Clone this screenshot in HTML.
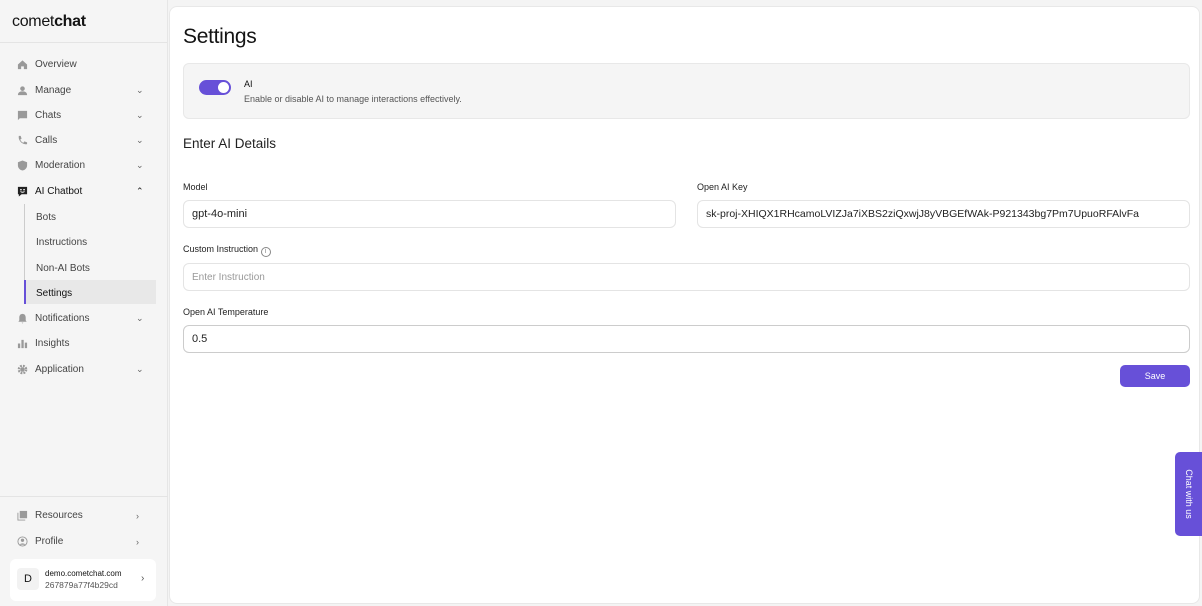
<!DOCTYPE html>
<html><head><style>
*{box-sizing:border-box;margin:0;padding:0}
body{width:1202px;height:606px;background:#f4f4f4;font-family:"Liberation Sans",sans-serif;color:#141414;position:relative;overflow:hidden}
.side{position:absolute;left:0;top:0;width:168px;height:606px;background:#f5f5f5;border-right:1px solid #e6e6e6}
.logo{height:43px;border-bottom:1px solid #e4e4e4;padding:13px 0 0 12px;font-size:16px;letter-spacing:-0.3px}
.logo b{font-weight:700}
.nav{position:absolute;left:0;width:168px;height:25px;font-size:10px;color:#444;display:flex;align-items:center;margin-top:1px}
.nav .ic{position:absolute;left:17px;top:7px;width:11px;height:11px}
.nav .t{position:absolute;left:35px}
.nav .ch{position:absolute;left:136px;font-size:9px;color:#666}
.sub{position:absolute;left:36px;font-size:10px;color:#444;margin-top:1px}
.main{position:absolute;left:169px;top:6px;width:1031px;height:598px;background:#fff;border:1px solid #e8e8e8;border-radius:8px}
h1{position:absolute;left:13px;top:18px;font-size:21px;font-weight:400;letter-spacing:-0.3px}
.card{position:absolute;left:13px;top:56px;width:1007px;height:56px;background:#f5f5f5;border:1px solid #e8e8e8;border-radius:6px}
.tog{position:absolute;left:15px;top:16px;width:32px;height:15px;background:#6750d8;border-radius:8px}
.tog:after{content:"";position:absolute;right:2px;top:2px;width:11px;height:11px;border-radius:50%;background:#fff}
.lbl{position:absolute;font-size:9px;color:#222}
.inp{position:absolute;height:28px;border:1px solid #e4e4e4;border-radius:6px;font-size:11px;padding-left:8px;display:flex;align-items:center;color:#222;white-space:nowrap;overflow:hidden}
</style></head><body>
<div class="side">
<div class="logo">comet<b>chat</b></div>
<div class="nav" style="top:51px"><svg class="ic" viewBox="0 0 12 12"><path d="M1 6L6 1.5 11 6V11H7.5V8h-3v3H1z" fill="#999"/></svg><span class="t">Overview</span></div>
<div class="nav" style="top:77px"><svg class="ic" viewBox="0 0 12 12"><circle cx="6" cy="4" r="2.5" fill="#999"/><path d="M1 11c0-3 2.5-4 5-4s5 1 5 4z" fill="#999"/></svg><span class="t">Manage</span><span class="ch">⌄</span></div>
<div class="nav" style="top:102px"><svg class="ic" viewBox="0 0 12 12"><path d="M1 1h10v8H3l-2 2z" fill="#999"/></svg><span class="t">Chats</span><span class="ch">⌄</span></div>
<div class="nav" style="top:127px"><svg class="ic" viewBox="0 0 12 12"><path d="M2 1l2 0 1 3-1.5 1c1 2 2 3 3.5 3.5L8 7l3 1v2c-5 1-10-4-9-9z" fill="#999"/></svg><span class="t">Calls</span><span class="ch">⌄</span></div>
<div class="nav" style="top:152px"><svg class="ic" viewBox="0 0 12 12"><path d="M6 0.5L11 2.5V6c0 3-2.5 5-5 5.5C3.5 11 1 9 1 6V2.5z" fill="#999"/></svg><span class="t">Moderation</span><span class="ch">⌄</span></div>
<div class="nav" style="top:178px;color:#111"><svg class="ic" viewBox="0 0 12 12"><path d="M1 1h10v8H5l-3 2.5V9H1z" fill="#222"/><circle cx="4.3" cy="4" r=".9" fill="#fff"/><circle cx="7.7" cy="4" r=".9" fill="#fff"/><path d="M3.8 6q2.2 1.6 4.4 0" stroke="#fff" fill="none"/></svg><span class="t">AI Chatbot</span><span class="ch" style="color:#222">⌃</span></div>
<div style="position:absolute;left:24px;top:204px;width:1px;height:100px;background:#ccc"></div>
<div style="position:absolute;left:24px;top:280px;width:2px;height:24px;background:#6750d8"></div>
<div style="position:absolute;left:26px;top:280px;width:130px;height:24px;background:#e8e8e8"></div>
<div class="sub" style="top:211px">Bots</div>
<div class="sub" style="top:236px">Instructions</div>
<div class="sub" style="top:262px">Non-AI Bots</div>
<div class="sub" style="top:287px;color:#111">Settings</div>
<div class="nav" style="top:305px"><svg class="ic" viewBox="0 0 12 12"><path d="M6 1c2.5 0 3.5 2 3.5 4V8l1 1.5h-9L2.5 8V5C2.5 3 3.5 1 6 1zM5 10.5h2L6 11.5z" fill="#999"/></svg><span class="t">Notifications</span><span class="ch">⌄</span></div>
<div class="nav" style="top:330px"><svg class="ic" viewBox="0 0 12 12"><path d="M1 6h2.5v5H1zM4.8 2h2.5v9H4.8zM8.5 5H11v6H8.5z" fill="#999"/></svg><span class="t">Insights</span></div>
<div class="nav" style="top:356px"><svg class="ic" viewBox="0 0 12 12"><circle cx="6" cy="6" r="4" fill="none" stroke="#999" stroke-width="2.5" stroke-dasharray="2 1.2"/><circle cx="6" cy="6" r="2.5" fill="#999"/></svg><span class="t">Application</span><span class="ch">⌄</span></div>
<div style="position:absolute;left:0;top:496px;width:168px;height:1px;background:#e4e4e4"></div>
<div class="nav" style="top:502px"><svg class="ic" viewBox="0 0 12 12"><rect x="3" y="1" width="8" height="8" fill="#999"/><path d="M1 3v8h8" stroke="#999" fill="none"/></svg><span class="t">Resources</span><span class="ch">›</span></div>
<div class="nav" style="top:528px"><svg class="ic" viewBox="0 0 12 12"><circle cx="6" cy="6" r="5" fill="none" stroke="#999"/><circle cx="6" cy="4.7" r="1.8" fill="#999"/><path d="M2.8 9.5c1-2 5.4-2 6.4 0" fill="#999"/></svg><span class="t">Profile</span><span class="ch">›</span></div>
<div style="position:absolute;left:10px;top:559px;width:146px;height:42px;background:#fff;border-radius:6px">
<div style="position:absolute;left:7px;top:9px;width:22px;height:22px;background:#f2f2f2;border-radius:4px;font-size:11px;text-align:center;line-height:22px">D</div>
<div style="position:absolute;left:35px;top:10px;font-size:8px;color:#111">demo.cometchat.com</div>
<div style="position:absolute;left:35px;top:21px;font-size:8.5px;color:#555">267879a77f4b29cd</div>
<div style="position:absolute;left:131px;top:14px;font-size:10px;color:#555">›</div>
</div>
</div>
<div class="main">
<h1>Settings</h1>
<div class="card"><div class="tog"></div>
<div style="position:absolute;left:60px;top:15px;font-size:9px;color:#111">AI</div>
<div style="position:absolute;left:60px;top:30px;font-size:9px;color:#555">Enable or disable AI to manage interactions effectively.</div></div>
<div style="position:absolute;left:13px;top:129px;font-size:13.5px;color:#222">Enter AI Details</div>
<div class="lbl" style="left:13px;top:175px">Model</div>
<div class="inp" style="left:13px;top:193px;width:493px">gpt-4o-mini</div>
<div class="lbl" style="left:527px;top:175px">Open AI Key</div>
<div class="inp" style="left:527px;top:193px;width:493px;font-size:10.5px">sk-proj-XHIQX1RHcamoLVIZJa7iXBS2ziQxwjJ8yVBGEfWAk-P921343bg7Pm7UpuoRFAlvFa</div>
<div class="lbl" style="left:13px;top:237px">Custom Instruction <span style="display:inline-block;width:10px;height:10px;border:1px solid #888;border-radius:50%;font-size:7px;text-align:center;line-height:8px;color:#888;vertical-align:-1px">i</span></div>
<div class="inp" style="left:13px;top:256px;width:1007px;color:#999;font-size:10px">Enter Instruction</div>
<div class="lbl" style="left:13px;top:300px">Open AI Temperature</div>
<div class="inp" style="left:13px;top:318px;width:1007px;border-color:#ccc">0.5</div>
<div style="position:absolute;left:950px;top:358px;width:70px;height:22px;background:#6750d8;border-radius:5px;color:#fff;font-size:9px;text-align:center;line-height:22px">Save</div>
</div>
<div style="position:absolute;left:1175px;top:452px;width:27px;height:84px;background:#6750d8;border-radius:5px 0 0 5px"><div style="position:absolute;left:14px;top:42px;transform:translate(-50%,-50%) rotate(90deg);color:#fff;font-size:9px;white-space:nowrap">Chat with us</div></div>
</body></html>
